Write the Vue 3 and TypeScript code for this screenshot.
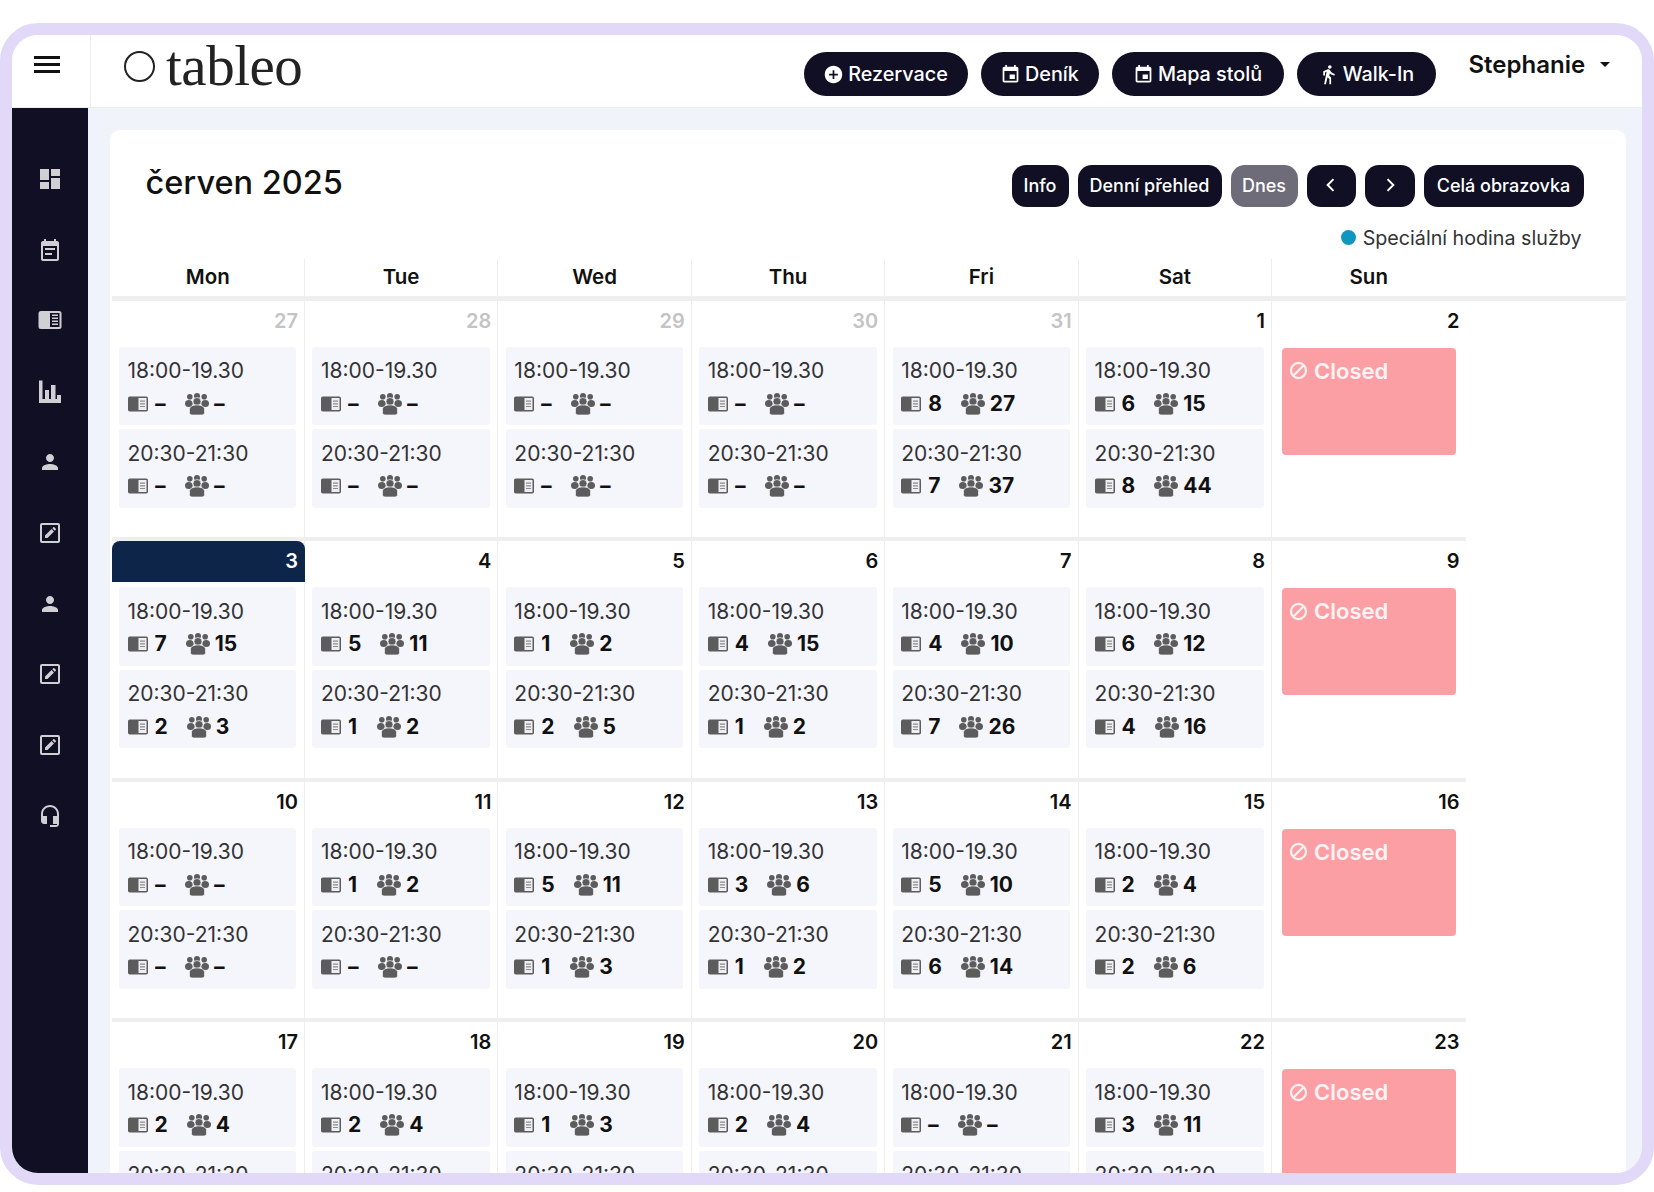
<script setup lang="ts">
type Slot = { time: string; a: string; b: string }
type Day = { num: number; muted?: boolean; today?: boolean; closed?: boolean; slots: Slot[] }

const T1 = '18:00-19.30'
const T2 = '20:30-21:30'
const d = (num: number, v: string[], opts: Partial<Day> = {}): Day => ({
  num,
  slots: [
    { time: T1, a: v[0], b: v[1] },
    { time: T2, a: v[2], b: v[3] },
  ],
  ...opts,
})
const closed = (num: number): Day => ({ num, closed: true, slots: [] })
const none = ['-', '-', '-', '-']
const weeks: Day[][] = [
  [
    d(27, none, { muted: true }),
    d(28, none, { muted: true }),
    d(29, none, { muted: true }),
    d(30, none, { muted: true }),
    d(31, ['8', '27', '7', '37'], { muted: true }),
    d(1, ['6', '15', '8', '44']),
    closed(2),
  ],
  [
    d(3, ['7', '15', '2', '3'], { today: true }),
    d(4, ['5', '11', '1', '2']),
    d(5, ['1', '2', '2', '5']),
    d(6, ['4', '15', '1', '2']),
    d(7, ['4', '10', '7', '26']),
    d(8, ['6', '12', '4', '16']),
    closed(9),
  ],
  [
    d(10, none),
    d(11, ['1', '2', '-', '-']),
    d(12, ['5', '11', '1', '3']),
    d(13, ['3', '6', '1', '2']),
    d(14, ['5', '10', '6', '14']),
    d(15, ['2', '4', '2', '6']),
    closed(16),
  ],
  [
    d(17, ['2', '4', '-', '-']),
    d(18, ['2', '4', '-', '-']),
    d(19, ['1', '3', '-', '-']),
    d(20, ['2', '4', '-', '-']),
    d(21, none),
    d(22, ['3', '11', '-', '-']),
    closed(23),
  ],
]
const dayNames = ['Mon', 'Tue', 'Wed', 'Thu', 'Fri', 'Sat', 'Sun']
const P = {
  person: 'M12 12c2.21 0 4-1.79 4-4s-1.79-4-4-4-4 1.79-4 4 1.79 4 4 4zm0 2c-2.67 0-8 1.34-8 4v2h16v-2c0-2.66-5.33-4-8-4z',
  today: 'M19 3h-1V1h-2v2H8V1H6v2H5c-1.11 0-1.99.9-1.99 2L3 19c0 1.1.89 2 2 2h14c1.1 0 2-.9 2-2V5c0-1.1-.9-2-2-2zm0 16H5V8h14v11zM11 12h6v5h-6z',
}
const sideIcons = ['dash', 'cal', 'book', 'chart', 'person', 'edit', 'person', 'edit', 'edit', 'head']
</script>

<template>
  <div class="frame">
    <div class="burger-cell">
      <span class="burger"><i></i><i></i><i></i></span>
    </div>
    <header class="topbar">
      <div class="logo"><span class="logo-ring"></span><span class="logo-text">tableo</span></div>
      <div class="top-actions">
        <button class="pill pill-rez">
          <svg viewBox="0 0 24 24" class="pill-ic"><path fill="currentColor" d="M12 2C6.48 2 2 6.48 2 12s4.48 10 10 10 10-4.48 10-10S17.52 2 12 2zm5 11h-4v4h-2v-4H7v-2h4V7h2v4h4v2z" /></svg>
          Rezervace
        </button>
        <button class="pill pill-den">
          <svg viewBox="0 0 24 24" class="pill-ic"><path fill="currentColor" :d="P.today" /></svg>
          Deník
        </button>
        <button class="pill pill-map">
          <svg viewBox="0 0 24 24" class="pill-ic"><path fill="currentColor" :d="P.today" /></svg>
          Mapa stolů
        </button>
        <button class="pill pill-walk">
          <svg viewBox="0 0 24 24" class="pill-ic"><path fill="currentColor" d="M13.5 5.5c1.1 0 2-.9 2-2s-.9-2-2-2-2 .9-2 2 .9 2 2 2zM9.8 8.9L7 23h2.1l1.8-8 2.1 2v6h2v-7.5l-2.1-2 .6-3C14.8 12 16.8 13 19 13v-2c-1.9 0-3.5-1-4.3-2.4l-1-1.6c-.4-.6-1-1-1.7-1-.3 0-.5.1-.8.1L6 8.3V13h2V9.6l1.8-.7" /></svg>
          Walk-In
        </button>
      </div>
      <div class="user">Stephanie<span class="caret"></span></div>
    </header>

    <nav class="sidebar">
      <span v-for="(ic, i) in sideIcons" :key="i" class="side-item">
        <svg viewBox="0 0 24 24" class="side-ic">
          <path v-if="ic === 'dash'" fill="currentColor" d="M2 13h9V2H2v11zm0 9h9v-7H2v7zm11 0h9V11h-9v11zm0-20v7h9V2h-9z" />
          <path v-else-if="ic === 'cal'" fill="currentColor" d="M17 10H7v2h10v-2zm2-7h-1V1h-2v2H8V1H6v2H5c-1.11 0-1.99.9-1.99 2L3 21c0 1.1.89 2 2 2h14c1.1 0 2-.9 2-2V5c0-1.1-.9-2-2-2zm0 18H5V8h14v13zm-5-6H7v2h7v-2z" />
          <template v-else-if="ic === 'book'">
            <rect x="0.500" y="3" width="23" height="18" rx="2.500" fill="currentColor" />
            <path fill="#100f24" d="M12 5h9.500v14H12z" />
            <path fill="currentColor" d="M14 6.500h6V8h-6zm0 3h6V11h-6zm0 3h6V14h-6zm0 3h6V17h-6z" />
          </template>
          <path v-else-if="ic === 'chart'" fill="currentColor" d="M1 1.500h3.500V20H7v-9h4v9h2V6h4.500v14H19v-4h4v8H1z" />
          <path v-else-if="ic === 'person'" fill="currentColor" :d="P.person" />
          <template v-else-if="ic === 'edit'">
            <rect x="3" y="3" width="18" height="18" rx="1" fill="none" stroke="currentColor" stroke-width="2" />
            <path fill="currentColor" d="M7 17v-2.500l6.500-6.500 2.500 2.500-6.500 6.500zM14.300 7.200l1-1c.3-.3.700-.3 1 0l1.500 1.500c.3.300.3.700 0 1l-1 1z" />
          </template>
          <path v-else fill="currentColor" d="M12 1c-4.970 0-9 4.030-9 9v7c0 1.660 1.340 3 3 3h3v-8H5v-2c0-3.870 3.130-7 7-7s7 3.130 7 7v2h-4v8h4v1h-7v2h6c1.660 0 3-1.340 3-3V10c0-4.970-4.030-9-9-9z" />
        </svg>
      </span>
    </nav>

    <main class="content">
      <section class="card">
        <div class="toolbar">
          <h1 class="title">červen 2025</h1>
          <div class="tools">
            <button class="tbtn b-info">Info</button>
            <button class="tbtn b-den">Denní přehled</button>
            <button class="tbtn b-dnes">Dnes</button>
            <button class="tbtn b-nav">
              <svg viewBox="0 0 24 24" class="chev"><path fill="none" stroke="currentColor" stroke-width="2.400" d="M15 5l-7 7 7 7" /></svg>
            </button>
            <button class="tbtn b-nav">
              <svg viewBox="0 0 24 24" class="chev"><path fill="none" stroke="currentColor" stroke-width="2.400" d="M9 5l7 7-7 7" /></svg>
            </button>
            <button class="tbtn b-full">Celá obrazovka</button>
          </div>
        </div>
        <div class="legend"><span class="dot"></span>Speciální hodina služby</div>

        <div class="calendar">
          <div class="head">
            <div v-for="n in dayNames" :key="n" class="head-cell">{{ n }}</div>
          </div>
          <div v-for="(w, wi) in weeks" :key="wi" class="week">
            <div v-for="day in w" :key="day.num" class="cell">
              <div class="num" :class="{ muted: day.muted, today: day.today }">{{ day.num }}</div>
              <div v-if="day.closed" class="closed">
                <svg viewBox="0 0 24 24" class="block-ic">
                  <circle cx="12" cy="12" r="9.500" fill="none" stroke="currentColor" stroke-width="2.800" />
                  <path d="M6 18L18 6" stroke="currentColor" stroke-width="2.800" />
                </svg>
                Closed
              </div>
              <template v-else>
                <div v-for="s in day.slots" :key="s.time" class="slot">
                  <div class="time">{{ s.time }}</div>
                  <div class="stats">
                    <svg viewBox="0 0 20 16" class="ic-book">
                      <rect x="0" y="0.500" width="20" height="15" rx="1.800" fill="#5c5c5c" />
                      <rect x="10.500" y="2" width="8" height="12" fill="#efeff3" />
                      <path fill="#8c8c8c" d="M12 4.500h5v1.200h-5zM12 7.200h5v1.200h-5zM12 9.900h5v1.200h-5z" />
                    </svg>
                    <b class="val val-a" :class="{ dash: s.a === '-' }">{{ s.a }}</b>
                    <svg viewBox="0 0 24 22" class="ic-grp">
                      <g fill="#5c5c5c">
                        <circle cx="4.800" cy="3.800" r="2.800" />
                        <circle cx="19.200" cy="3.800" r="2.800" />
                        <circle cx="12" cy="3" r="3" />
                        <ellipse cx="3.800" cy="10.500" rx="3.800" ry="3.500" />
                        <ellipse cx="20.200" cy="10.500" rx="3.800" ry="3.500" />
                      </g>
                      <g fill="#5c5c5c" stroke="#f5f5fc" stroke-width="0.700">
                        <circle cx="12" cy="8.500" r="4" />
                        <path d="M4.500 16.500c0-3 3-4.500 7.500-4.500s7.500 1.500 7.500 4.500v3c0 1.500-1 2.500-2.500 2.500H7c-1.500 0-2.500-1-2.500-2.500z" />
                      </g>
                    </svg>
                    <b class="val val-b" :class="{ dash: s.b === '-' }">{{ s.b }}</b>
                  </div>
                </div>
              </template>
            </div>
          </div>
        </div>
      </section>
    </main>
  </div>
</template>

<style>
html, body { margin: 0; background: #fff; overflow: hidden; }
</style>

<style scoped>
* { box-sizing: border-box; }
.frame {
  margin-top: 23px;
  width: 1654px;
  height: 1162px;
  border: 12.5px solid #e2d9f9;
  border-radius: 38px;
  overflow: hidden;
  background: #f1f3fa;
  display: grid;
  grid-template-columns: 79px 1fr;
  grid-template-rows: 72.5px 1fr;
  font-family: Inter, "Noto Sans", sans-serif;
  color: #111;
}
.burger-cell {
  background: #fff;
  border-right: 1px solid #eee;
  border-bottom: 1px solid #eee;
  display: flex;
  justify-content: center;
  padding-top: 21px;
}
.burger { width: 26px; height: 17px; display: flex; flex-direction: column; justify-content: space-between; margin-right: 9px; }
.burger i { display: block; height: 3px; background: #111; }
.topbar {
  background: #fff;
  border-bottom: 1px solid #eee;
  display: flex;
  padding-left: 33px;
}
.logo { display: flex; align-items: center; width: 180px; height: 56px; margin-top: 3px; gap: 11px; flex: none; }
.logo-ring { width: 31px; height: 31px; border: 2px solid #222; border-radius: 50%; flex: none; margin-top: 1px; }
.logo-text {
  font-family: "Liberation Serif", serif;
  font-size: 57px;
  line-height: 56px;
  letter-spacing: -0.5px;
  color: #222;
}
.top-actions { display: flex; gap: 13px; margin-left: 499.500px; margin-top: 17px; height: 44px; }
.pill {
  height: 44px;
  border: 0;
  border-radius: 22px;
  background: #100f24;
  color: #fff;
  font: 500 19.800px Inter, sans-serif;
  display: flex;
  align-items: center;
  justify-content: center;
  gap: 4px;
  padding: 0;
}
.pill-ic { width: 21px; height: 21px; }
.pill-rez { width: 164px; }
.pill-den { width: 118px; }
.pill-map { width: 172px; }
.pill-walk { width: 139px; }
.user { font: 600 24px Inter, sans-serif; margin-left: 33px; padding-top: 15px; display: flex; align-items: flex-start; height: 50px; }
.caret {
  width: 0; height: 0;
  border-left: 5.500px solid transparent;
  border-right: 5.500px solid transparent;
  border-top: 5.500px solid #111;
  margin-left: 15px;
  margin-top: 12px;
}
.sidebar {
  width: 75.500px;
  background: #100f24;
  padding-top: 36px;
  display: flex;
  flex-direction: column;
}
.side-item { height: 70.800px; display: flex; align-items: center; justify-content: center; flex: none; }
.side-ic { width: 24px; height: 24px; color: #cfcfd4; }
.content { padding: 22px 16.500px 0 18.500px; overflow: hidden; min-height: 0; min-width: 0; }
.card {
  background: #fff;
  border-radius: 10px 10px 0 0;
  height: 1100px;
  padding-top: 34px;
}
.toolbar { display: flex; justify-content: space-between; padding: 0 42px 0 36px; height: 43px; }
.title { margin: 1px 0 0; font: 500 32.500px/36px Inter, sans-serif; color: #111; letter-spacing: 0; }
.tools { display: flex; gap: 9px; padding-top: 1px; }
.tbtn {
  height: 42px;
  border: 0;
  padding: 0 0 1px;
  border-radius: 14px;
  background: #100f24;
  color: #fff;
  font: 500 18px Inter, sans-serif;
  display: flex; align-items: center; justify-content: center;
}
.b-info { width: 57px; }
.b-den { width: 144px; }
.b-dnes { width: 67px; background: #6d6c78; }
.b-nav { width: 49.500px; }
.b-full { width: 160px; }
.chev { width: 20px; height: 20px; }
.legend {
  display: flex; justify-content: flex-end; align-items: center;
  height: 24px; margin-top: 19px; padding-right: 44px;
  font: 400 19.700px Inter, sans-serif; color: #333;
}
.dot { width: 15px; height: 15px; border-radius: 50%; background: #0f97c0; margin-right: 7px; }
.calendar { margin: 9px 0 0 2px; }
.head {
  display: grid;
  grid-template-columns: repeat(7, 193.430px);
  height: 42px;
  border-bottom: 5px solid #efefef;
}
.head-cell {
  font: 600 20.500px/35px Inter, sans-serif;
  text-align: center;
  border-right: 1px solid #eee;
  color: #111;
}
.head-cell:last-child { border-right: 0; }
.week {
  display: grid;
  grid-template-columns: repeat(7, 193.430px);
  height: 240.500px;
  width: 1354px;
  border-bottom: 4px solid #efefef;
}
.cell { border-right: 1.500px solid #eee; display: flex; flex-direction: column; min-width: 0; }
.cell:last-child { border-right: 0; }
.num {
  height: 41px;
  flex: none;
  margin-right: -1.500px;
  text-align: right;
  padding: 0 7.500px 0 0;
  font: 600 20px/40px Inter, sans-serif;
  color: #111;
}
.num.muted { color: #c4c4c4; }
.num.today { background: #0c2548; color: #fff; border-radius: 8px 8px 0 0; }
.slot {
  margin: 5px 7.500px 0 7.500px;
  height: 78.500px;
  background: #f5f5fc;
  border-radius: 3px;
  padding: 9.500px 8.500px 0;
  flex: none;
}
.slot + .slot { margin-top: 4px; }
.time { font: 400 21px/30px Inter, sans-serif; color: #333; }
.stats { display: flex; align-items: center; height: 30px; margin-top: 2.500px; }
.ic-book { width: 20px; height: 16px; flex: none; }
.ic-grp { width: 24px; height: 22px; flex: none; }
.val { font: 700 21px/30px Inter, sans-serif; color: #111; display: inline-block; }
.val-a { margin-left: 7px; margin-right: 19px; min-width: 10px; }
.val-b { margin-left: 5px; }
.val-a.dash { margin-left: 5px; width: 13px; transform: scaleX(1.5); transform-origin: left center; }
.val-b.dash { margin-left: 3px; width: 13px; transform: scaleX(1.5); transform-origin: left center; }
.closed {
  margin: 6px 9.500px 0 10px;
  height: 107px;
  background: #fc9fa5;
  border-radius: 4px;
  padding: 7px 7px 0;
  color: #fff3f3;
  font: 600 22px/32px Inter, sans-serif;
  display: flex;
  align-items: flex-start;
  gap: 6px;
  flex: none;
}
.block-ic { width: 19px; height: 19px; margin-top: 6.500px; flex: none; }
</style>
